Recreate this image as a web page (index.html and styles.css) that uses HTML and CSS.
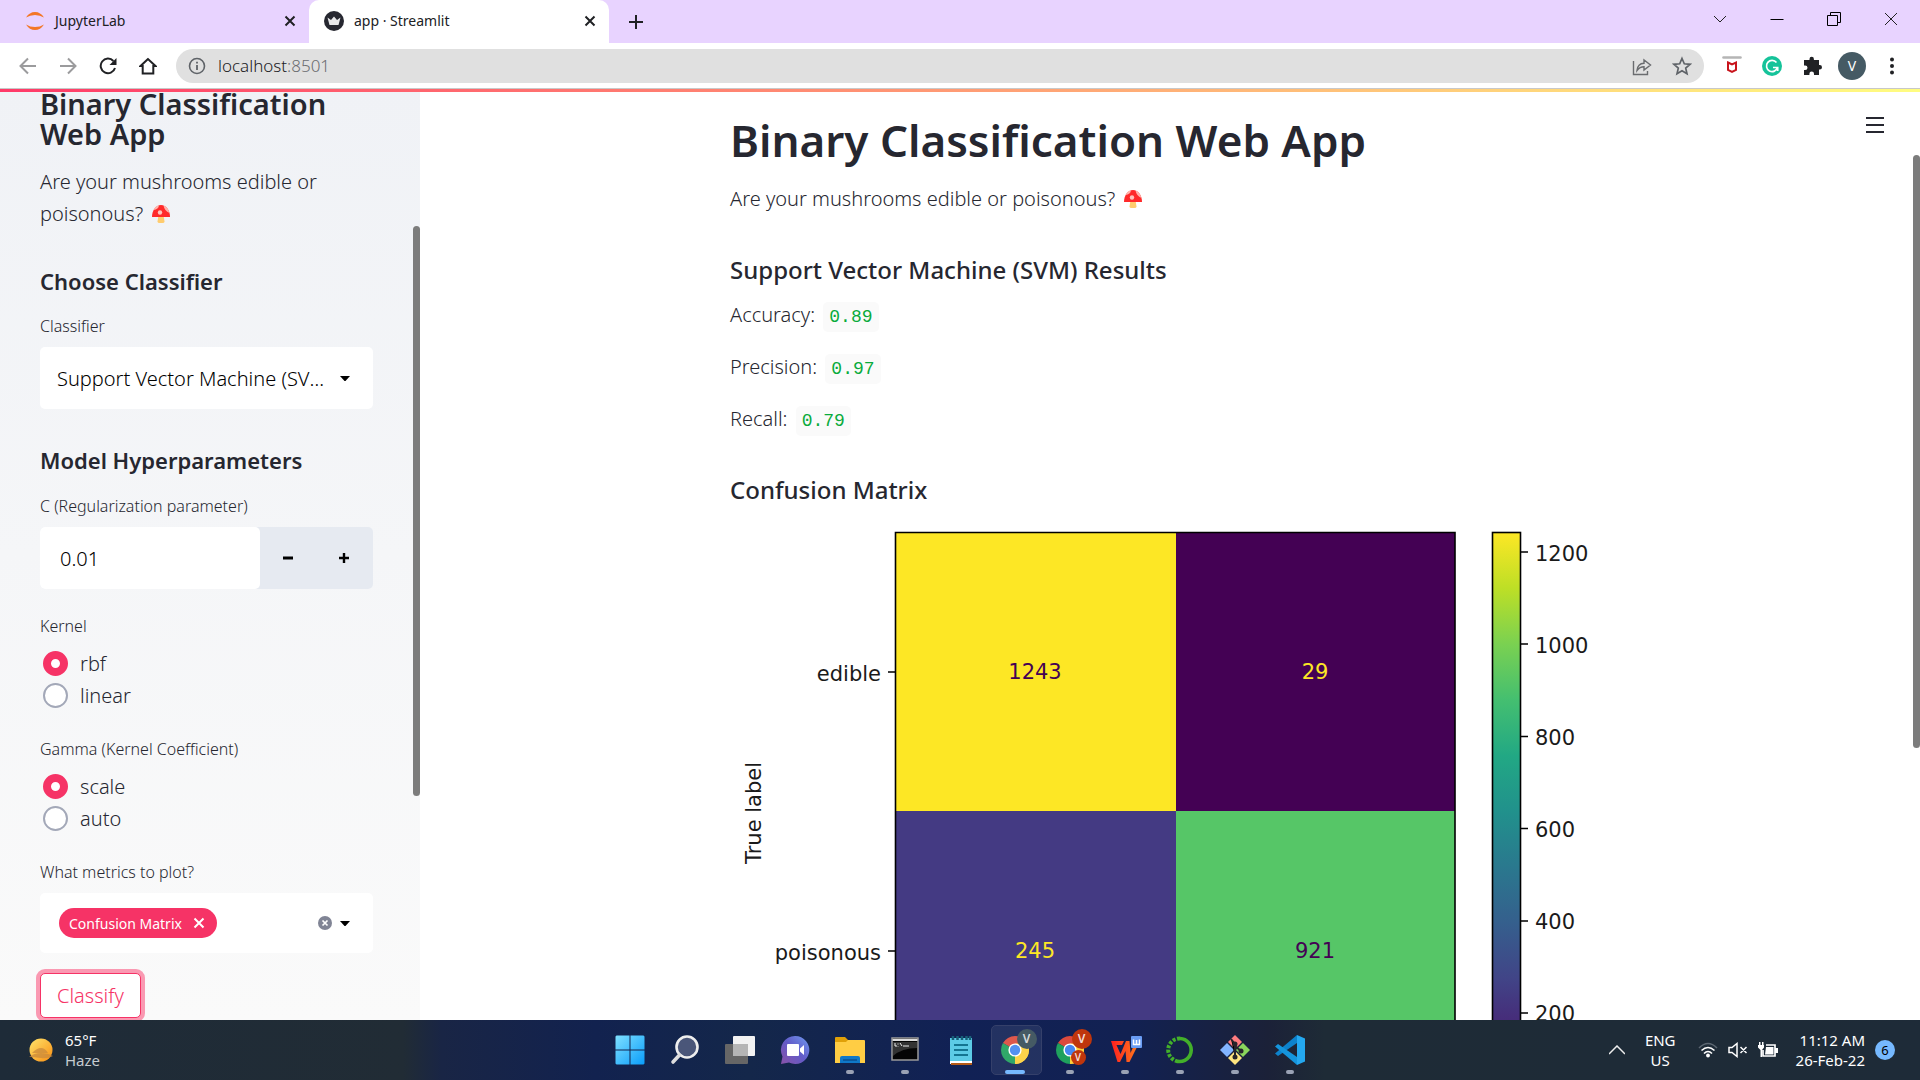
FILE: index.html
```html
<!DOCTYPE html>
<html lang="en">
<head>
<meta charset="utf-8">
<title>app · Streamlit</title>
<link rel="stylesheet" href="styles.css">
</head>
<body>
<svg class="defs" width="0" height="0" aria-hidden="true">
  <symbol id="mushroom" viewBox="0 0 18 18">
    <path d="M6.500 10h5l1 6.500q0 1.500-2 1.500h-3q-2 0-2-1.500z" fill="#ffcc6e"/>
    <path d="M0 12C0 5 4 0 9 0s9 5 9 12z" fill="#ff2a2a"/>
    <path d="M1.500 5Q4 .5 7 .2 6.500 4.500 1.500 5zM11.500.5q4.500 1.500 6 7.500-5-2-6-7.500z" fill="#ffb3ab"/>
    <circle cx="8" cy="7.500" r="2.200" fill="#ffc4bd"/>
  </symbol>
  <symbol id="close" viewBox="0 0 12 12"><path d="M1.500 1.500l9 9M10.500 1.500l-9 9" stroke="currentColor" stroke-width="2" fill="none"/></symbol>
  <symbol id="chrome" viewBox="0 0 28 28">
    <path d="M14 14L1.900 7A14 14 0 0 1 26.100 7z" fill="#dc4a3d"/>
    <path d="M14 14L26.100 7A14 14 0 0 1 14 28z" fill="#fdd03b"/>
    <path d="M14 14v14A14 14 0 0 1 1.900 7z" fill="#1fa15d"/>
    <path d="M14 7.500h12.400A14 14 0 0 1 14 28l5.600-10.700z" fill="#fdd03b"/>
    <circle cx="14" cy="14" r="6.600" fill="#fff"/><circle cx="14" cy="14" r="5.200" fill="#4688f1"/>
  </symbol>
</svg>

<header class="browser">
  <div class="tabstrip">
    <div class="tab">
      <svg width="20" height="20" viewBox="0 0 20 20"><path d="M1 6.500Q4.500 1 10 1t9 5.500Q15 4 10 4T1 6.500zM1 13.500Q4.500 19 10 19t9-5.500q-4 2.500-9 2.500t-9-2.500z" fill="#f37726"/></svg>
      <span class="tab-title">JupyterLab</span>
      <button class="tab-close" aria-label="Close JupyterLab"><svg width="12" height="12"><use href="#close"/></svg></button>
    </div>
    <div class="tab tab-active">
      <svg width="20" height="20" viewBox="0 0 20 20"><circle cx="10" cy="10" r="10" fill="#262730"/><path d="M3.500 6.500l3.500 2.500 3-3.500 3 3.500 3.500-2.500-2 7.500h-9z" fill="#e8e8ea"/></svg>
      <span class="tab-title">app · Streamlit</span>
      <button class="tab-close" aria-label="Close app"><svg width="12" height="12"><use href="#close"/></svg></button>
    </div>
    <button class="new-tab" aria-label="New tab"><svg width="16" height="16" viewBox="0 0 16 16"><path d="M8 1v14M1 8h14" stroke="#202124" stroke-width="2"/></svg></button>
    <div class="window-buttons">
      <button aria-label="Search tabs"><svg width="14" height="14" viewBox="0 0 14 14"><path d="M1 4l6 6 6-6" fill="none" stroke="#222"/></svg></button>
      <button aria-label="Minimize"><svg width="14" height="14" viewBox="0 0 14 14"><path d="M.5 7.500h13" stroke="#000"/></svg></button>
      <button aria-label="Restore"><svg width="14" height="14" viewBox="0 0 14 14"><path d="M.5 3.500h10v10H.5zM3.500 3.500v-3h10v10h-3" fill="none" stroke="#000"/></svg></button>
      <button aria-label="Close"><svg width="14" height="14" viewBox="0 0 14 14"><path d="M1 1l12 12M13 1L1 13" stroke="#222"/></svg></button>
    </div>
  </div>
  <div class="toolbar">
    <div class="nav">
      <button class="dim" aria-label="Back"><svg width="18" height="18" viewBox="0 0 18 18"><path d="M17 9H2M9 1.500L1.500 9 9 16.500" fill="none" stroke="currentColor" stroke-width="2"/></svg></button>
      <button class="dim" aria-label="Forward"><svg width="18" height="18" viewBox="0 0 18 18"><path d="M1 9h15M9 1.500L16.500 9 9 16.500" fill="none" stroke="currentColor" stroke-width="2"/></svg></button>
      <button aria-label="Reload"><svg width="18" height="18" viewBox="0 0 18 18"><path d="M16 11a7.300 7.300 0 1 1-1.600-7" fill="none" stroke="currentColor" stroke-width="2"/><path d="M17.500 1v7h-7z" fill="currentColor"/></svg></button>
      <button aria-label="Home"><svg width="18" height="18" viewBox="0 0 18 18"><path d="M9 2L1.500 9h2.200v7.500h10.600V9h2.200z" fill="none" stroke="currentColor" stroke-width="2"/></svg></button>
    </div>
    <div class="omnibox">
      <svg width="18" height="18" viewBox="0 0 18 18"><circle cx="9" cy="9" r="7.500" fill="none" stroke="#5f6368" stroke-width="1.600"/><path d="M9 8v5M9 4.800v1.800" stroke="#5f6368" stroke-width="1.800"/></svg>
      <span class="url">localhost<span class="port">:8501</span></span>
      <button aria-label="Share"><svg width="20" height="20" viewBox="0 0 20 20"><path d="M1.500 5v13.500h14V15M5 14.500c.5-5 3-7 7-7.200V4l6.500 5-6.500 5v-3.200c-3 0-5 1-7 3.700z" fill="none" stroke="#6a6c6f" stroke-width="1.400"/></svg></button>
      <button aria-label="Bookmark"><svg width="20" height="20" viewBox="0 0 20 20"><path d="M10 2.500l2.300 5.300 5.700.5-4.300 3.800 1.300 5.600-5-3-5 3 1.300-5.600L2 8.300l5.700-.5z" fill="none" stroke="#5f6368" stroke-width="1.700"/></svg></button>
    </div>
    <div class="extensions">
      <button aria-label="WebAdvisor"><svg width="20" height="20" viewBox="0 0 20 20"><path d="M1.500 1.500h17" stroke="#b5b5b5" stroke-width="2.600" stroke-linecap="round"/><path d="M6 6.500l4 2 4-2v7.500l-4 2-4-2z" fill="none" stroke="#c8141c" stroke-width="2"/></svg></button>
      <button aria-label="Grammarly"><svg width="20" height="20" viewBox="0 0 20 20"><circle cx="10" cy="10" r="10" fill="#15c39a"/><path d="M14.500 6.500A5.600 5.600 0 1 0 15.500 11.500M11 11.500h4.700v3.500" fill="none" stroke="#fff" stroke-width="1.700"/></svg></button>
      <button aria-label="Extensions"><svg width="20" height="20" viewBox="0 0 20 20"><path d="M2 4h5.500V3a2.200 2.200 0 0 1 4.400 0v1H17v5h.8a2.200 2.200 0 0 1 0 4.400H17V19h-5v-1.200a2.300 2.300 0 0 0-4.600 0V19H2v-5h1.200a2.300 2.300 0 0 0 0-4.600H2z" fill="#202124"/></svg></button>
      <button class="avatar" aria-label="Profile">V</button>
      <button aria-label="Menu"><svg width="20" height="20" viewBox="0 0 20 20"><circle cx="10" cy="3.500" r="2" fill="#202124"/><circle cx="10" cy="10" r="2" fill="#202124"/><circle cx="10" cy="16.500" r="2" fill="#202124"/></svg></button>
    </div>
  </div>
</header>

<div class="app">
  <div class="decoration"></div>
  <aside class="sidebar">
    <h1>Binary Classification Web App</h1>
    <p class="tagline">Are your mushrooms edible or poisonous? <svg class="emoji" width="18" height="18"><use href="#mushroom"/></svg></p>
    <h2>Choose Classifier</h2>
    <label class="label" for="classifier">Classifier</label>
    <div class="select">
      <select id="classifier"><option>Support Vector Machine (SVM)</option></select>
      <svg class="caret" width="10" height="5" viewBox="0 0 10 5"><path d="M0 0h10L5.500 5h-1z"/></svg>
    </div>
    <h2>Model Hyperparameters</h2>
    <label class="label" for="c-param">C (Regularization parameter)</label>
    <div class="number">
      <input id="c-param" type="text" inputmode="decimal" value="0.01">
      <button aria-label="Decrease"><svg width="10" height="10" viewBox="0 0 10 10"><path d="M0 5h10" stroke="#000" stroke-width="3"/></svg></button>
      <button aria-label="Increase"><svg width="10" height="10" viewBox="0 0 10 10"><path d="M0 5h10M5 0v10" stroke="#000" stroke-width="2.400"/></svg></button>
    </div>
    <fieldset>
      <legend class="label">Kernel</legend>
      <label class="radio"><input type="radio" name="kernel" checked>rbf</label>
      <label class="radio"><input type="radio" name="kernel">linear</label>
    </fieldset>
    <fieldset>
      <legend class="label">Gamma (Kernel Coefficient)</legend>
      <label class="radio"><input type="radio" name="gamma" checked>scale</label>
      <label class="radio"><input type="radio" name="gamma">auto</label>
    </fieldset>
    <div class="label" id="metrics-label">What metrics to plot?</div>
    <div class="multiselect" role="group" aria-labelledby="metrics-label">
      <span class="tag">Confusion Matrix <button aria-label="Remove Confusion Matrix"><svg width="12" height="12"><use href="#close"/></svg></button></span>
      <button class="clear" aria-label="Clear all"><svg width="14" height="14" viewBox="0 0 14 14"><circle cx="7" cy="7" r="7" fill="#808495"/><path d="M4.500 4.500l5 5M9.500 4.500l-5 5" stroke="#fff" stroke-width="1.700"/></svg></button>
      <svg class="caret" width="10" height="5" viewBox="0 0 10 5"><path d="M0 0h10L5.500 5h-1z"/></svg>
    </div>
    <button class="classify">Classify</button>
    <span class="thumb sidebar-thumb"></span>
  </aside>

  <main>
    <button class="hamburger" aria-label="Main menu"><svg width="18" height="16" viewBox="0 0 18 16"><path d="M0 1h18M0 8h18M0 15h18" stroke="#262730" stroke-width="2"/></svg></button>
    <span class="thumb main-thumb"></span>
    <div class="content">
      <h1>Binary Classification Web App</h1>
      <p>Are your mushrooms edible or poisonous? <svg class="emoji" width="18" height="18"><use href="#mushroom"/></svg></p>
      <h3>Support Vector Machine (SVM) Results</h3>
      <p>Accuracy: <code>0.89</code></p>
      <p>Precision: <code>0.97</code></p>
      <p>Recall: <code>0.79</code></p>
      <h3>Confusion Matrix</h3>
      <svg class="chart" viewBox="0 9 880 580" role="img" aria-label="Confusion matrix">
        <defs>
          <linearGradient id="viridis" x1="0" y1="0" x2="0" y2="1">
            <stop offset="0" stop-color="#fde725"/><stop offset=".1" stop-color="#bddf26"/><stop offset=".2" stop-color="#7ad151"/>
            <stop offset=".3" stop-color="#44bf70"/><stop offset=".4" stop-color="#22a884"/><stop offset=".5" stop-color="#21918c"/>
            <stop offset=".6" stop-color="#2a788e"/><stop offset=".7" stop-color="#355f8d"/><stop offset=".8" stop-color="#414487"/>
            <stop offset=".9" stop-color="#482475"/><stop offset="1" stop-color="#440154"/>
          </linearGradient>
        </defs>
        <rect x="166" y="22" width="280" height="279" fill="#fde725"/>
        <rect x="446" y="22" width="279" height="279" fill="#440154"/>
        <rect x="166" y="301" width="280" height="279" fill="#443a83"/>
        <rect x="446" y="301" width="279" height="279" fill="#56c667"/>
        <path d="M165.500 22.500h559.500v558H165.500zM158 162h8M158 441h8M306 580v8M585 580v8" fill="none" stroke="#000" stroke-width="1.600"/>
        <rect x="762.500" y="22.500" width="28" height="558" fill="url(#viridis)" stroke="#000" stroke-width="1.600"/>
        <path d="M791 42h7M791 134h7M791 226.500h7M791 318.500h7M791 411h7M791 503h7" stroke="#000" stroke-width="1.600"/>
        <g class="middle">
          <text x="305" y="169" fill="#440154">1243</text><text x="585" y="169" fill="#fde725">29</text>
          <text x="305" y="448" fill="#fde725">245</text><text x="585" y="448" fill="#440154">921</text>
          <text transform="translate(31 303) rotate(-90)">True label</text>
        </g>
        <g class="end"><text x="151" y="171">edible</text><text x="151" y="450">poisonous</text></g>
        <g><text x="805" y="51">1200</text><text x="805" y="143">1000</text><text x="805" y="235">800</text><text x="805" y="327">600</text><text x="805" y="419">400</text><text x="805" y="511">200</text></g>
      </svg>
    </div>
  </main>
</div>

<footer class="taskbar">
  <div class="weather">
    <svg width="26" height="26" viewBox="0 0 26 26"><defs><linearGradient id="sun" x1="0" y1="0" x2="1" y2="1"><stop offset="0" stop-color="#ffe46b"/><stop offset="1" stop-color="#f98f13"/></linearGradient></defs><circle cx="13" cy="13" r="11.500" fill="url(#sun)"/><path d="M4 16q5-5 9-5t7 5zM1 20q5-4 12-4t12 3q-5 3-12 2T1 20z" fill="#c98a3c" opacity=".75"/></svg>
    <div class="two-line"><span>65°F</span><span class="soft">Haze</span></div>
  </div>
  <nav class="icons" aria-label="Taskbar">
    <button aria-label="Start"><svg width="30" height="30" viewBox="0 0 30 30"><defs><linearGradient id="win" x1="0" y1="0" x2="1" y2="1"><stop offset="0" stop-color="#7fe0ff"/><stop offset="1" stop-color="#0a9dfa"/></linearGradient></defs><path d="M1.500.5h13v14H.5v-13zM15.500.5h13l1 1v13h-14zM.5 15.500h14v14h-13l-1-1zM15.500 15.500h14v13l-1 1h-13z" fill="url(#win)"/></svg></button>
    <button aria-label="Search"><svg width="30" height="30" viewBox="0 0 30 30"><circle cx="17" cy="12" r="10.500" fill="#4a5679" stroke="#eee" stroke-width="2.600"/><path d="M9.500 20L3 27" stroke="#dedede" stroke-width="3.600" stroke-linecap="round"/></svg></button>
    <button aria-label="Task view"><svg width="30" height="30" viewBox="0 0 30 30"><rect x="8" y="1" width="22" height="20" rx="1" fill="#f2f2f2"/><rect y="9" width="23" height="20" rx="1" fill="#666"/><path d="M8 9h15v12H8z" fill="#b5b5b5"/></svg></button>
    <button aria-label="Chat"><svg width="30" height="30" viewBox="0 0 30 30"><defs><linearGradient id="chat" x1="0" y1="1" x2="1" y2="0"><stop offset="0" stop-color="#8a52a8"/><stop offset=".5" stop-color="#625bc8"/><stop offset="1" stop-color="#6f9bf0"/></linearGradient></defs><path d="M15 1a14 14 0 1 1-6 26.500L1 29l1.500-7.500A14 14 0 0 1 15 1z" fill="url(#chat)"/><rect x="7" y="9" width="12" height="12" rx="1" fill="#fff"/><path d="M20 13.500l4-3.500v10l-4-3.500z" fill="#fff"/></svg></button>
    <button class="open" aria-label="File Explorer"><svg width="30" height="30" viewBox="0 0 30 30"><path d="M0 3q0-1 1-1h9l3 3v5H0z" fill="#e0a008"/><path d="M0 7h11l2-2h16q1 0 1 1v22H0z" fill="#ffcd44"/><path d="M5 28v-5q0-2 2-2h16q2 0 2 2v5z" fill="#0f78c8"/><path d="M8 25h14" stroke="#0a4f91" stroke-width="1.500"/></svg></button>
    <button class="open" aria-label="Command Prompt"><svg width="30" height="30" viewBox="0 0 30 30"><rect x="2" y="3" width="26" height="22" fill="#050505" stroke="#9a9a9a" stroke-width="1.500"/><path d="M2.500 5h25" stroke="#ddd" stroke-width="2"/><path d="M3 7h24v6Q12 13 3 21z" fill="#333"/><path d="M5 8v3h2M8 8.500v1M8 11v.5M10 8l2 3M13 11h6" stroke="#eee" fill="none"/></svg></button>
    <button aria-label="Notepad"><svg width="30" height="30" viewBox="0 0 30 30"><path d="M5 3h22v25H5z" fill="#5ccbe6"/><path d="M5 26h22v2q0 1-1 1H5z" fill="#fff"/><path d="M6 29h21" stroke="#b45a16" stroke-width="2"/><path d="M9 10h14M9 15h14M9 20h14" stroke="#147591" stroke-width="2"/><path d="M8 1v4M12.500 1v4M17 1v4M21.500 1v4M25 1v4" stroke="#176078" stroke-width="2.500"/></svg></button>
    <button class="open active" aria-label="Chrome"><svg width="28" height="28"><use href="#chrome"/></svg><span class="badge slate">V</span></button>
    <button class="open" aria-label="Chrome profile"><svg width="28" height="28"><use href="#chrome"/></svg><span class="badge rust">V</span><span class="badge rust low">V</span></button>
    <button class="open" aria-label="WPS Office"><svg width="36" height="36" viewBox="0 0 36 36"><defs><linearGradient id="wps"><stop offset="0" stop-color="#ff1f1f"/><stop offset="1" stop-color="#ff7a1c"/></linearGradient></defs><path d="M4 9h13l-2 4H9.500l4 9L19 9h3.500l1 12L27 13l-1.500-3.500h3L31 13l-8.500 17h-3L18.500 19 13 30h-2.500z" fill="url(#wps)"/><rect x="24" y="4" width="11" height="12" rx="1" fill="#6a9df5"/><path d="M26.500 7.500v5h6v-5M29.500 8v4.500" fill="none" stroke="#fff" stroke-width="1.500"/></svg></button>
    <button class="open" aria-label="Anaconda"><svg width="30" height="30" viewBox="0 0 30 30"><path d="M15 3.500a11.500 11.500 0 1 1-5 22" fill="none" stroke="#43b02a" stroke-width="3.600"/><path d="M15 3.500a11.500 11.500 0 0 0-5 22" fill="none" stroke="#43b02a" stroke-width="4" stroke-dasharray="3 1.500"/></svg></button>
    <button class="open" aria-label="Git"><svg width="30" height="30" viewBox="0 0 30 30"><path d="M8 7l7-7 7 7-7 7z" fill="#ff7c80"/><path d="M23 8l7 7-7 7-7-7z" fill="#8ad65c"/><path d="M7 8l7 7-7 7-7-7z" fill="#82b4ff"/><path d="M8 23l7-7 7 7-7 7z" fill="#ffe580"/><path d="M11 4l4 5v13M15 11l6 5" stroke="#26242b" stroke-width="2"/><circle cx="15" cy="9" r="2.500" fill="#26242b"/><circle cx="21" cy="16" r="2.500" fill="#26242b"/><circle cx="15" cy="22" r="2.500" fill="#26242b"/></svg></button>
    <button class="open" aria-label="Visual Studio Code"><svg width="30" height="30" viewBox="0 0 30 30"><path d="M22 0l8 3.500v23L22 30z" fill="#24a8f0"/><path d="M0 18.500L22 0v8L3 21z" fill="#0d82cc"/><path d="M0 11.500l3-2.500 19 13v8z" fill="#1595dd"/></svg></button>
  </nav>
  <div class="tray">
    <button aria-label="Show hidden icons"><svg width="16" height="10" viewBox="0 0 16 10"><path d="M0 9l8-8 8 8" fill="none" stroke="#eee" stroke-width="1.500"/></svg></button>
    <div class="two-line lang"><span>ENG</span><span>US</span></div>
    <div class="status">
      <svg width="20" height="16" viewBox="0 0 20 16"><path d="M1 6q9-9 18 0" stroke="#5c6772" fill="none" stroke-width="1.600"/><path d="M3.500 8.500q6.500-6 13 0M6 11.500q4-4 8 0" stroke="#fff" fill="none" stroke-width="1.600"/><circle cx="10" cy="13.500" r="1.900" fill="#fff"/></svg>
      <svg width="20" height="16" viewBox="0 0 20 16"><path d="M1 5.500h3L9 1.500v13l-5-4H1zM12.500 5l6 6M18.500 5l-6 6" stroke="#fff" fill="none" stroke-width="1.500"/></svg>
      <svg width="20" height="16" viewBox="0 0 20 16"><path d="M8 3h9v11H5V8" stroke="#fff" fill="none" stroke-width="1.700"/><path d="M8 5h7.500v7.500H7zM17 6h3v5h-3zM0 3h6v2.500L4 8v7H2.500V8L0 5.500zM1 0h1.500v3H1zM4 0h1.500v3H4z" fill="#fff"/></svg>
    </div>
    <div class="two-line clock"><span>11:12 AM</span><span>26-Feb-22</span></div>
    <span class="count">6</span>
  </div>
</footer>
</body>
</html>
```
FILE: styles.css
```css
* { box-sizing: border-box; }

body {
  margin: 0;
  height: 100vh;
  display: flex;
  flex-direction: column;
  overflow: hidden;
  background: #fff;
  color: #262730;
  font-family: "Noto Sans", "Open Sans", sans-serif;
  font-size: 19px;
}

button {
  display: flex;
  align-items: center;
  justify-content: center;
  padding: 0;
  border: 0;
  background: none;
  color: inherit;
  font: inherit;
}

svg { flex: none; }
h1, h2, h3, p, fieldset { margin: 0; padding: 0; border: 0; }
.defs { position: absolute; }

/* Browser window */
.browser { flex: none; border-bottom: 1px solid #c8c8c8; color: #202124; }
.tabstrip { display: flex; height: 43px; background: #e8d3ff; }
.tab { display: flex; align-items: center; width: 309px; padding: 0 10px 2px 25px; }
.tab-active { width: 300px; padding-left: 15px; background: #fff; border-radius: 10px 10px 0 0; }
.tab-title { flex: 1; margin-left: 10px; font-size: 14px; }
.tab-close { width: 18px; height: 18px; }
.new-tab { width: 54px; }
.window-buttons { display: flex; margin-left: auto; padding: 0 1px 6px 0; }
.window-buttons button { width: 57px; }

.toolbar { display: flex; align-items: center; height: 45px; }
.nav { display: flex; padding: 0 8px; }
.nav button { width: 40px; height: 34px; }
.nav .dim { color: #9b9b9d; }
.omnibox {
  flex: 1;
  display: flex;
  align-items: center;
  gap: 20px;
  height: 34px;
  padding: 0 12px;
  border-radius: 17px;
  background: #e0e0e0;
}
.url { flex: 1; margin-left: -8px; font-size: 17px; font-weight: 300; }
.port { color: #6b6d70; }
.extensions { display: flex; align-items: center; padding: 0 8px; }
.extensions button { width: 40px; }
.extensions .avatar {
  width: 28px;
  height: 28px;
  margin: 0 6px;
  border-radius: 50%;
  background: #455a64;
  color: #fff;
  font-size: 14px;
}

/* Streamlit page */
.app {
  position: relative;
  flex: 1;
  min-height: 0;
  display: flex;
  overflow: hidden;
  font-size: 20px;
  font-weight: 300;
}
.decoration {
  position: absolute;
  inset: 0 0 auto 0;
  height: 3px;
  z-index: 2;
  background: linear-gradient(90deg, #ff3a69, #fffd80);
}
.thumb { position: absolute; right: 0; width: 7px; border-radius: 4px; background: #7c7c7c; }
.sidebar-thumb { top: 137px; height: 570px; }
.main-thumb { top: 66px; height: 593px; }

.sidebar {
  position: relative;
  flex: none;
  width: 420px;
  padding: 0 47px 0 40px;
  background: linear-gradient(#f0f2f6, #fafafa);
}
.sidebar h1 { height: 77px; font-size: 29px; font-weight: 600; line-height: 30px; }
.tagline { line-height: 32px; }
.emoji { margin-left: 4px; vertical-align: -2px; }
.sidebar h2 { padding-top: 37px; height: 84px; font-size: 22px; font-weight: 600; line-height: 28px; }
.select + h2 { height: 85px; }
.label { display: block; height: 33px; padding: 0; font-size: 16px; line-height: 24px; }

.select { position: relative; display: flex; align-items: center; height: 62px; }
.select .caret { position: absolute; right: 23px; }
select {
  width: 100%;
  height: 100%;
  padding: 0 46px 0 17px;
  border: 0;
  border-radius: 5px;
  background: #fff;
  color: #000;
  font: inherit;
  appearance: none;
  text-overflow: ellipsis;
}
.number {
  display: flex;
  height: 62px;
  margin-bottom: 25px;
  border-radius: 5px;
  background: #e6eaf1;
}
.number input {
  flex: 1;
  min-width: 0;
  padding: 0 20px;
  border: 0;
  border-radius: 5px;
  background: #fff;
  color: #000;
  font: inherit;
}
.number button { width: 56px; }
.number button:last-child { padding-right: 1px; width: 57px; }

fieldset { height: 123px; }
.radio { display: flex; align-items: center; gap: 12px; height: 32px; padding-left: 3px; }
.radio input {
  width: 25px;
  height: 25px;
  margin: 0;
  border: 2px solid #a3a8b8;
  border-radius: 50%;
  background: #fff;
  appearance: none;
}
.radio input:checked { border: 8px solid #f63366; }

.multiselect {
  display: flex;
  align-items: center;
  gap: 8px;
  height: 60px;
  margin-bottom: 20px;
  padding: 0 23px 0 19px;
  border-radius: 5px;
  background: #fff;
}
.tag {
  display: flex;
  align-items: center;
  gap: 11px;
  height: 30px;
  margin-right: auto;
  padding: 0 12px 0 10px;
  border-radius: 15px;
  background: #f63366;
  color: #fff;
  font-size: 14px;
  font-weight: 400;
}
.classify {
  height: 45px;
  padding: 0 16px;
  border: 1px solid #f63366;
  border-radius: 5px;
  background: #fff;
  box-shadow: 0 0 0 4px #fa99b2;
  color: #f63366;
}

main { position: relative; flex: 1; min-width: 0; }
.hamburger { position: absolute; top: 28px; right: 36px; }
.content { max-width: 920px; margin: 0 auto; padding: 24px 20px 0; }
.content h1 { height: 70px; font-size: 44px; font-weight: 600; line-height: 54px; white-space: nowrap; }
.content p { height: 52px; line-height: 32px; }
.content h3 { padding-top: 19px; height: 64px; font-size: 24px; font-weight: 500; line-height: 32px; }
code {
  margin-left: 3px;
  padding: 5px 6px;
  border-radius: 5px;
  background: #fafafa;
  color: #09ab3b;
  font-family: "Liberation Mono", monospace;
  font-size: 18px;
}
.chart {
  display: block;
  width: 100%;
  font-family: "DejaVu Sans", sans-serif;
  font-size: 21px;
  font-weight: 400;
  fill: #1a1a1a;
}
.middle { text-anchor: middle; }
.end { text-anchor: end; }

/* Windows taskbar */
.taskbar {
  flex: none;
  display: grid;
  grid-template-columns: 1fr auto 1fr;
  height: 60px;
  background: linear-gradient(90deg, #1e2b38 0, #212c35 21%, #192545 23%, #12224f 31%, #14274a 39%, #112155 50%, #122152 59%, #1b2138 66%, #1e2b36 69%, #1e2b38);
  color: #fff;
  font-size: 15px;
}
.weather { display: flex; align-items: center; gap: 11px; padding-left: 28px; }
.two-line { display: flex; flex-direction: column; line-height: 20px; }
.soft { color: #c6cbd0; }
.icons { display: flex; }
.icons button { position: relative; width: 55px; height: 60px; }
.open::after {
  content: "";
  position: absolute;
  bottom: 6px;
  width: 8px;
  height: 4px;
  border-radius: 2px;
  background: #9aa2b5;
}
.active::before {
  content: "";
  position: absolute;
  inset: 5px 1px 5px 3px;
  border: 1px solid #35406a;
  border-radius: 5px;
  background: #ffffff14;
}
.active::after { width: 20px; background: #76b9ff; }
.badge {
  position: absolute;
  top: 9px;
  right: 6px;
  width: 20px;
  height: 20px;
  border-radius: 50%;
  font-size: 12px;
  font-weight: 600;
  line-height: 20px;
}
.slate { background: #455a64; color: #d5dadc; }
.rust { background: #bf360c; color: #f2dcd4; }
.low { top: 30px; right: 12px; width: 15px; height: 15px; font-size: 10px; line-height: 15px; }

.tray { display: flex; align-items: center; justify-content: flex-end; padding-right: 25px; }
.lang { align-items: center; margin: 0 22px 0 20px; }
.status { display: flex; gap: 10px; margin-right: 18px; }
.clock { align-items: flex-end; margin-right: 10px; }
.count {
  width: 20px;
  height: 20px;
  border-radius: 50%;
  background: #76b9ff;
  color: #000;
  font-size: 13px;
  line-height: 20px;
  text-align: center;
}
```
